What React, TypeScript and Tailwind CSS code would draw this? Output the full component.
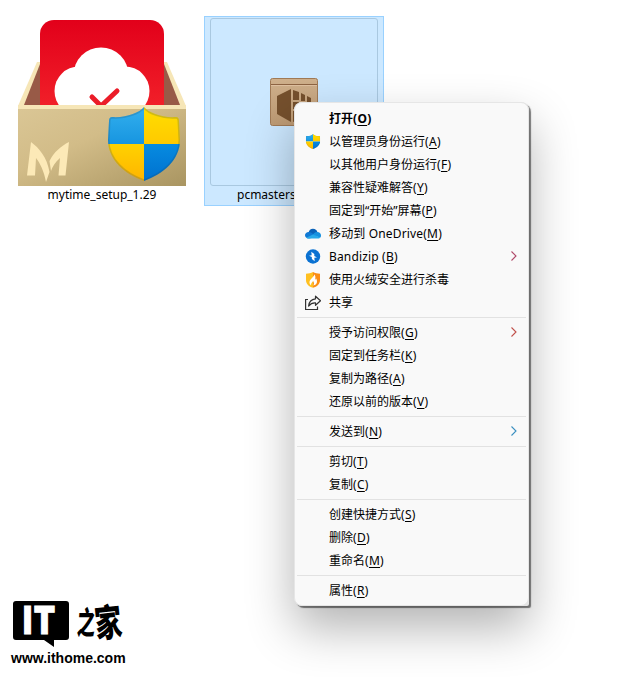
import React from "react";

type Item = {
  label: string;
  accessKey?: string;
  icon?: React.ReactNode;
  bold?: boolean;
  submenu?: string;
};

function Shield({ id, className }: { id: string; className: string }) {
  const shape =
    "M36 0C31 6 18 11 4 10Q1 10 1 14L0 33C0 53 17 67 36 74C55 67 72 53 72 33L71 14Q71 10 68 10C54 11 41 6 36 0Z";
  return (
    <svg viewBox="0 0 72 74" className={className}>
      <defs>
        <clipPath id={id}>
          <path d={shape} />
        </clipPath>
        <linearGradient id={id + "b"} x1="0" y1="0" x2="0" y2="1">
          <stop offset="0" stopColor="#33b0ee" />
          <stop offset="1" stopColor="#1795e0" />
        </linearGradient>
        <linearGradient id={id + "y"} x1="0" y1="0" x2="0" y2="1">
          <stop offset="0" stopColor="#ffdf00" />
          <stop offset="1" stopColor="#ffc900" />
        </linearGradient>
        <linearGradient id={id + "o"} x1="0" y1="0" x2="0" y2="1">
          <stop offset="0" stopColor="#ffd200" />
          <stop offset="1" stopColor="#ffb400" />
        </linearGradient>
        <linearGradient id={id + "d"} x1="0" y1="0" x2="0" y2="1">
          <stop offset="0" stopColor="#078be0" />
          <stop offset="1" stopColor="#0071cf" />
        </linearGradient>
      </defs>
      <g clipPath={`url(#${id})`}>
        <rect width="36" height="37" fill={`url(#${id}b)`} />
        <rect x="36" width="36" height="37" fill={`url(#${id}y)`} />
        <rect y="37" width="36" height="37" fill={`url(#${id}o)`} />
        <rect x="36" y="37" width="36" height="37" fill={`url(#${id}d)`} />
        <path d={shape} fill="none" stroke="#26485e" strokeOpacity=".22" strokeWidth="3" />
      </g>
    </svg>
  );
}

function CloudIcon() {
  return (
    <svg viewBox="0 0 16 16" className="size-4">
      <path d="M3.500 7C3.800 4.300 5.700 2.800 8 2.800c2.200 0 3.900 1.200 4.500 3.600L9 9.500Z" fill="#0a62b8" />
      <path d="M4 12.600C1.500 12.600 0 11.200 0 9.300 0 7.100 1.700 5.800 4 5.900c1 0 1.700.3 2.500.8L12 11Z" fill="#1179d4" />
      <path d="M7.500 9.500c1-2.200 2.500-3.500 4.700-3.400C14.500 6.200 16 7.600 16 9.600c0 1-.2 1.500-.7 2L9 10Z" fill="#1690df" />
      <path d="M1.200 11.700 8 8.400 15.400 11.500C14.800 12.300 14 12.600 13 12.600H4C2.800 12.600 1.900 12.300 1.200 11.700Z" fill="#27a9ea" />
    </svg>
  );
}

function BoltIcon() {
  return (
    <svg viewBox="0 0 16 16" className="size-4">
      <circle cx="8" cy="7.500" r="7.200" fill="#0b72d2" />
      <path d="M6.300 2.800 9.300 4.900V6.900L12 8.400 9.300 8.700 9.700 12.200 6.900 10 6.800 8.100 4 6.800 6.700 6.300Z" fill="#fff" />
    </svg>
  );
}

function FlameIcon() {
  return (
    <svg viewBox="0 0 16 16" className="size-4">
      <path d="M8 0C6 1.300 3.500 1.700 1 1.700v6.500C1 12 4 14.500 8 15.800V0Z" fill="#ffc020" />
      <path d="M8 0c2 1.300 4.500 1.700 7 1.700v6.500C15 12 12 14.500 8 15.800V0Z" fill="#fb8d14" />
      <path d="M9.300 2.300c.3 2.500-4.800 4.700-4.800 7.900 0 1.400.5 2.400 1.500 3.100 0-2 .8-2.900 2.200-4.300.2 1.200.9 1.600.8 2.500 0 .7-.3 1.500-.8 2.100 2.400-.6 3.800-2 3.800-4.200 0-1.200-.4-2.200-.8-3-.2.7-.5 1.100-1 1.300.4-2.200.4-4-.9-5.400Z" fill="#fff" />
    </svg>
  );
}

function ShareIcon() {
  return (
    <svg viewBox="0 0 16 16" className="size-4" fill="none" stroke="#333" strokeWidth="1.200">
      <path d="M3 4.500H.6V14.500H12.500V11.500" />
      <path d="M10.500 1.200 15.500 5.800 10.500 10.300V7.900C7.500 7.700 5.500 8.700 3.600 11 4 7 6.500 4.200 10.500 3.800Z" strokeLinejoin="round" />
    </svg>
  );
}

const groups: Item[][] = [
  [
    { label: "打开", accessKey: "O", bold: true },
    { label: "以管理员身份运行", accessKey: "A", icon: <Shield id="run" className="mb-px h-[15px] w-4" /> },
    { label: "以其他用户身份运行", accessKey: "F" },
    { label: "兼容性疑难解答", accessKey: "Y" },
    { label: "固定到“开始”屏幕", accessKey: "P" },
    { label: "移动到 OneDrive", accessKey: "M", icon: <CloudIcon /> },
    { label: "Bandizip ", accessKey: "B", icon: <BoltIcon />, submenu: "#b04a6a" },
    { label: "使用火绒安全进行杀毒", icon: <FlameIcon /> },
    { label: "共享", icon: <ShareIcon /> },
  ],
  [
    { label: "授予访问权限", accessKey: "G", submenu: "#c0504a" },
    { label: "固定到任务栏", accessKey: "K" },
    { label: "复制为路径", accessKey: "A" },
    { label: "还原以前的版本", accessKey: "V" },
  ],
  [{ label: "发送到", accessKey: "N", submenu: "#3a8fc0" }],
  [
    { label: "剪切", accessKey: "T" },
    { label: "复制", accessKey: "C" },
  ],
  [
    { label: "创建快捷方式", accessKey: "S" },
    { label: "删除", accessKey: "D" },
    { label: "重命名", accessKey: "M" },
  ],
  [{ label: "属性", accessKey: "R" }],
];

function MenuRow({ item }: { item: Item }) {
  return (
    <div className="flex h-[23px] items-center pr-[11px] pl-[10px]">
      <span className="flex w-6 shrink-0 items-center">{item.icon}</span>
      <span className={`flex-1 text-xs leading-[23px] whitespace-pre text-black ${item.bold ? "font-bold" : ""}`}>
        <span className={/[a-z]/.test(item.label) ? "tracking-[0.15px]" : ""}>{item.label}</span>
        {item.accessKey && (
          <span className="tracking-[0.3px]">
            (<span className="underline decoration-1 underline-offset-2">{item.accessKey}</span>)
          </span>
        )}
      </span>
      {item.submenu && (
        <svg viewBox="0 0 6 10" className="mb-0.5 h-[10px] w-[6px]" fill="none" stroke={item.submenu} strokeWidth="1.100">
          <path d="M.5.5 5 5 .5 9.500" />
        </svg>
      )}
    </div>
  );
}

function ContextMenu() {
  return (
    <div className="absolute top-[102px] left-[294px] w-[235px] rounded-[8px] rounded-br-[2px] bg-[#e4e4e4] shadow-[2px_2px_1px_rgba(0,0,0,0.5),0_22px_48px_rgba(0,0,0,0.3)]">
      <div className="rounded-[8px] border border-[#e6e6e6] bg-[#f9f9f9] pt-1 pb-[3px]">
        {groups.map((group, i) => (
          <React.Fragment key={i}>
            {i > 0 && (
              <div className="flex h-[7px] items-center px-[2px]">
                <div className="h-px w-full bg-[#e2e2e2]" />
              </div>
            )}
            {group.map((item) => (
              <MenuRow key={item.label} item={item} />
            ))}
          </React.Fragment>
        ))}
      </div>
    </div>
  );
}

function InstallerBox() {
  return (
    <svg viewBox="0 0 168 168" className="size-[168px]">
      <defs>
        <linearGradient id="red" x1="0" y1="0" x2="0" y2="1">
          <stop offset="0" stopColor="#e2001a" />
          <stop offset="1" stopColor="#f3242b" />
        </linearGradient>
        <linearGradient id="box" x1="0" y1="0" x2="1" y2="1">
          <stop offset="0" stopColor="#dac695" />
          <stop offset=".4" stopColor="#d2bc88" />
          <stop offset="1" stopColor="#a99561" />
        </linearGradient>
      </defs>
      <path d="M19 44H149L168 88V91H0V88Z" fill="#f6e6b7" />
      <path d="M22 46H146L162 87H6Z" fill="#985a47" />
      <rect x="22" y="2" width="124" height="98" rx="14" fill="url(#red)" />
      <g fill="#fff">
        <circle cx="83" cy="57" r="27.500" />
        <circle cx="61" cy="73" r="24.500" />
        <circle cx="107" cy="73" r="24.500" />
        <rect x="58" y="66" width="52" height="30" />
      </g>
      <path d="M74 79 83 88 99 73" fill="none" stroke="#eb1c28" strokeWidth="5" strokeLinecap="round" strokeLinejoin="round" />
      <rect y="87" width="168" height="5" fill="#f6e6b7" />
      <rect y="91" width="168" height="77" fill="url(#box)" />
      <path d="M13 124C21 130 29 139 31.500 154L28 164C26 153 22 145 18 140L17 157.500H9Z" fill="#fce9b7" />
      <path d="M51 124 47.500 157.500H40.500L42 140C37 144 34.500 149 33 153L31.500 143C36 134 43 128 51 124Z" fill="#fce9b7" />
    </svg>
  );
}

function PackageIcon() {
  return (
    <svg viewBox="0 0 48 48" className="size-12">
      <defs>
        <linearGradient id="pkg" x1="0" y1="0" x2="0" y2="1">
          <stop offset="0" stopColor="#cfb08c" />
          <stop offset="1" stopColor="#bd9a74" />
        </linearGradient>
      </defs>
      <rect x=".5" y=".5" width="47" height="47" rx="2" fill="url(#pkg)" stroke="#a07a56" />
      <path d="M1 6.500H47" stroke="#8d6443" />
      <path d="M1 7.500H47" stroke="#dec0a0" />
      <path d="M7 18 21 11V44L7 36Z" fill="#75502d" />
      <path d="M23 12 29 14V22H23ZM31 15 35 17V23H31ZM37 18 41 20V24H37ZM23 24H29V31H23ZM31 25H35V31H31ZM37 26H41V31H37ZM23 33H41V36L23 44Z" fill="#75502d" />
    </svg>
  );
}

function SiteLogo() {
  return (
    <div className="flex w-[130px] flex-col pl-[11px] font-['Liberation_Sans',sans-serif] text-black">
      <div className="flex h-[47px]">
        <div className="grid h-[47px] w-[58px] shrink-0">
          <svg viewBox="0 0 58 47" className="col-start-1 row-start-1 h-[47px] w-[58px]">
            <path d="M4 0H55Q58 0 58 3V36Q58 39 55 39H43V46L33 39H5Q2 39 2 36V3Q2 0 5 0Z" />
          </svg>
          <span className="col-start-1 row-start-1 origin-left scale-x-[0.8] pl-[15px] font-['Inter',sans-serif] text-[39px] leading-[38px] font-black tracking-[2px] text-white [-webkit-text-stroke:1px_white]">IT</span>
        </div>
        <div className="flex pl-2 font-['Noto_Sans_CJK_SC',sans-serif] leading-[42px] font-black">
          <span className="w-[18px] origin-left scale-x-75 scale-y-130 -skew-x-6 text-[24px]">之</span>
          <span className="scale-y-140 -rotate-6 text-[27px]">家</span>
        </div>
      </div>
      <div className="text-[14px] leading-[20px] font-bold">www.ithome.com</div>
    </div>
  );
}

export default function App() {
  return (
    <div className="relative flex h-[677px] w-[624px] flex-col justify-between overflow-hidden bg-white font-['Noto_Sans','Noto_Sans_CJK_SC',sans-serif] text-xs text-black">
      <div className="flex pt-4 pl-3">
        <div className="flex h-[190px] w-[180px] flex-col items-center pt-[2px]">
          <div className="relative">
            <InstallerBox />
            <Shield id="badge" className="absolute top-[89px] left-[90px] h-[74px] w-[72px]" />
          </div>
          <span className="leading-[18px]">mytime_setup_1.29</span>
        </div>
        <div className="ml-3 flex h-[190px] w-[180px] flex-col items-center border border-[#99d1ff] bg-[#cce8ff] pt-px">
          <div className="flex size-[168px] items-center justify-center rounded-[3px] border-[1.500px] border-[#a9c8e0]">
            <PackageIcon />
          </div>
          <span className="self-start pl-8 leading-[18px]">pcmasters</span>
        </div>
      </div>
      <div className="pb-[9px]">
        <SiteLogo />
      </div>
      <ContextMenu />
    </div>
  );
}
